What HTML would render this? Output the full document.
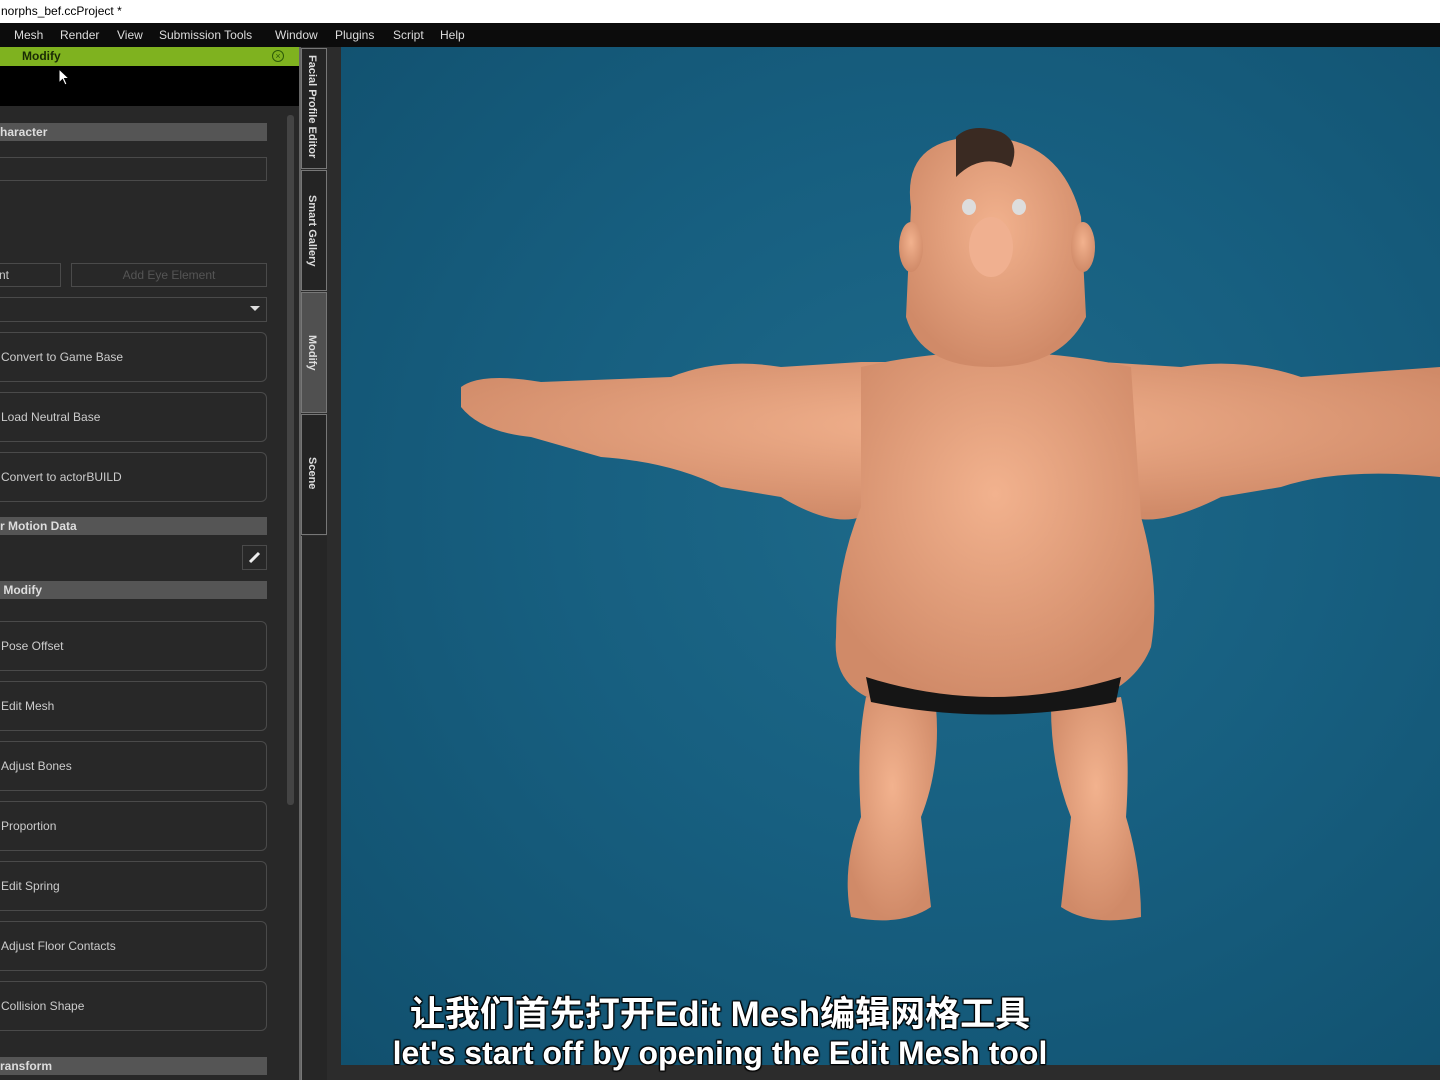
<!DOCTYPE html>
<html><head><meta charset="utf-8"><style>
*{margin:0;padding:0;box-sizing:border-box}
body{width:1440px;height:1080px;overflow:hidden;background:#2c2c2c;font-family:"Liberation Sans",sans-serif;position:relative}
.a{position:absolute}
.title{left:0;top:0;width:1440px;height:23px;background:#fff;color:#000;font-size:12px;line-height:23px;padding-left:1px}
.menu{left:0;top:23px;width:1440px;height:24px;background:#0c0c0c;color:#ddd;font-size:12px;line-height:24px}
.menu span{position:absolute;top:0}
.panel{left:0;top:47px;width:300px;height:1033px;background:#282828}
.hdr{left:0;top:47px;width:300px;height:19px;background:#7fb21f;color:#1a2a05;font-weight:bold;font-size:12px;line-height:19px}
.blk{left:0;top:66px;width:300px;height:40px;background:#000}
.sec{left:0;width:267px;height:18px;background:#555;color:#ddd;font-weight:bold;font-size:12px;line-height:18px}
.btn{left:-10px;width:277px;height:50px;border:1px solid #4a4a4a;border-radius:6px;color:#ccc;font-size:12px;line-height:48px;padding-left:10px}
.box{border:1px solid #4a4a4a}
.tab{left:301px;width:26px;background:#242424;border:1px solid #777;color:#ddd;font-size:11px;font-weight:bold}
.tab span{position:absolute;left:4px;top:6px;writing-mode:vertical-rl;white-space:nowrap}
.vp{left:341px;top:47px;width:1099px;height:1018px;background:radial-gradient(ellipse at 55% 45%,#1e6a8a 0%,#175f80 45%,#11506e 100%)}
.sub{left:340px;width:760px;text-align:center;color:#fff;font-weight:bold;font-family:"Liberation Sans","Noto Sans CJK SC",sans-serif;text-shadow:0 0 2px #000,1px 1px 1px #000,-1px -1px 1px #000,1px -1px 1px #000,-1px 1px 1px #000}
</style></head><body>
<div class="a title">norphs_bef.ccProject *</div>
<div class="a menu"><span style="left:14px">Mesh</span><span style="left:60px">Render</span><span style="left:117px">View</span><span style="left:159px">Submission Tools</span><span style="left:275px">Window</span><span style="left:335px">Plugins</span><span style="left:393px">Script</span><span style="left:440px">Help</span></div>
<div class="a panel"></div>
<div class="a hdr"><span style="margin-left:22px">Modify</span><span style="position:absolute;left:272px;top:3px;width:12px;height:12px;border:1px solid #2d5a08;border-radius:50%;font-size:9px;line-height:10px;text-align:center;color:#2d5a08;font-weight:normal">×</span></div>
<div class="a blk"></div>
<svg class="a" style="left:58px;top:68px" width="14" height="20"><path d="M1 1 L1 15 L4.5 11.5 L7 17 L9 16 L6.5 10.5 L11 10.5 Z" fill="#fff" stroke="#000" stroke-width="1"/></svg>
<div class="a" style="left:287px;top:115px;width:7px;height:690px;background:#444;border-radius:3px"></div>
<div class="a sec" style="top:123px">haracter</div>
<div class="a box" style="left:-2px;top:157px;width:269px;height:24px"></div>
<div class="a box" style="left:-2px;top:263px;width:63px;height:24px;color:#ccc;font-size:12px;line-height:22px">nt</div>
<div class="a box" style="left:71px;top:263px;width:196px;height:24px;color:#555;font-size:12px;line-height:22px;text-align:center">Add Eye Element</div>
<div class="a box" style="left:-2px;top:297px;width:269px;height:25px"></div>
<svg class="a" style="left:250px;top:306px" width="10" height="6"><path d="M0 0 L10 0 L5 5Z" fill="#ddd"/></svg>
<div class="a btn" style="top:332px">Convert to Game Base</div>
<div class="a btn" style="top:392px">Load Neutral Base</div>
<div class="a btn" style="top:452px">Convert to actorBUILD</div>
<div class="a sec" style="top:517px">r Motion Data</div>
<div class="a box" style="left:242px;top:545px;width:25px;height:25px"></div>
<svg class="a" style="left:247px;top:550px" width="15" height="15"><path d="M3 12 L12 3" stroke="#eee" stroke-width="3"/></svg>
<div class="a sec" style="top:581px">&nbsp;Modify</div>
<div class="a btn" style="top:621px">Pose Offset</div>
<div class="a btn" style="top:681px">Edit Mesh</div>
<div class="a btn" style="top:741px">Adjust Bones</div>
<div class="a btn" style="top:801px">Proportion</div>
<div class="a btn" style="top:861px">Edit Spring</div>
<div class="a btn" style="top:921px">Adjust Floor Contacts</div>
<div class="a btn" style="top:981px">Collision Shape</div>
<div class="a sec" style="top:1057px">ransform</div>
<div class="a" style="left:299px;top:47px;width:2px;height:1033px;background:#666"></div>
<div class="a tab" style="top:48px;height:121px"><span>Facial Profile Editor</span></div>
<div class="a tab" style="top:170px;height:121px"><span style="top:24px">Smart Gallery</span></div>
<div class="a tab" style="top:292px;height:121px;background:#505050"><span style="top:42px">Modify</span></div>
<div class="a tab" style="top:414px;height:121px"><span style="top:42px">Scene</span></div>
<div class="a" style="left:301px;top:536px;width:26px;height:544px;background:#262626;border-left:1px solid #777"></div>
<div class="a vp"></div>
<svg class="a" style="left:341px;top:47px" width="1099" height="1018">
<defs><radialGradient id="sk" cx="50%" cy="40%" r="60%"><stop offset="0" stop-color="#f2b28e"/><stop offset="1" stop-color="#d08a68"/></radialGradient></defs>
<g fill="url(#sk)">
<path d="M120 340 Q140 325 200 335 L330 330 Q380 310 440 320 L520 315 L760 315 L840 320 Q900 310 960 330 L1099 320 L1099 430 Q1000 420 940 440 L880 450 Q820 480 790 470 L520 470 Q490 480 440 450 L380 440 Q330 415 260 410 L190 390 Q140 385 120 360Z"/>
<path d="M520 320 Q650 290 790 320 L800 470 Q820 540 810 600 Q790 650 720 660 L560 660 Q490 650 495 590 Q495 520 520 460Z"/>
<path d="M570 160 Q560 90 640 90 Q720 90 740 170 L745 270 Q720 320 650 320 Q580 320 565 270Z"/>
<ellipse cx="742" cy="200" rx="12" ry="25"/><ellipse cx="570" cy="200" rx="12" ry="25"/>
<path d="M525 650 L595 660 Q600 720 580 770 L590 860 Q560 880 510 870 Q500 820 520 770 Q515 700 525 650Z"/>
<path d="M710 660 L780 650 Q790 700 785 770 Q800 820 800 870 Q750 880 720 860 L730 770 Q710 720 710 660Z"/>
</g>
<path d="M615 90 Q630 75 660 85 Q680 95 670 120 Q640 105 615 130Z" fill="#3a2a22"/>
<path d="M525 630 Q650 670 780 630 L775 655 Q650 680 530 655Z" fill="#151515"/>
<ellipse cx="628" cy="160" rx="7" ry="8" fill="#ddd"/><ellipse cx="678" cy="160" rx="7" ry="8" fill="#ddd"/>
<ellipse cx="650" cy="200" rx="22" ry="30" fill="#f0b090"/>
</svg>
<div class="a sub" style="top:990px;font-size:35px;line-height:50px">让我们首先打开Edit Mesh编辑网格工具</div>
<div class="a sub" style="top:1030px;font-size:32px;line-height:46px">let's start off by opening the Edit Mesh tool</div>
</body></html>
